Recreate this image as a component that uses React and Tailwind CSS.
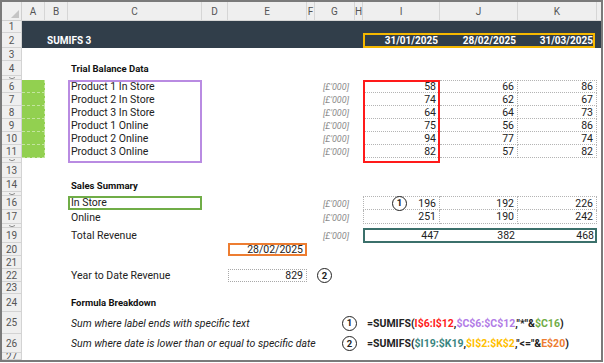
import React from 'react';

const cols = ['A', 'B', 'C', 'D', 'E', 'F', 'G', 'H', 'I', 'J', 'K'];
const colStart = [
    'col-start-2', 'col-start-3', 'col-start-4', 'col-start-5', 'col-start-6', 'col-start-7',
    'col-start-8', 'col-start-9', 'col-start-10', 'col-start-11', 'col-start-12'
];

// row number -> grid row class (grid row 1 is the column header); tiny = hidden-ish row
const rowHeads = [
    ['1', 'row-start-2'], ['2', 'row-start-3'], ['3', 'row-start-4'], ['4', 'row-start-5'],
    ['5', 'row-start-6', true], ['6', 'row-start-7'], ['7', 'row-start-8'], ['8', 'row-start-9'],
    ['9', 'row-start-10'], ['10', 'row-start-11'], ['11', 'row-start-12'], ['12', 'row-start-13', true],
    ['13', 'row-start-14'], ['14', 'row-start-15'], ['15', 'row-start-16', true], ['16', 'row-start-17'],
    ['17', 'row-start-18'], ['18', 'row-start-19', true], ['19', 'row-start-20'], ['20', 'row-start-21'],
    ['21', 'row-start-22'], ['22', 'row-start-23'], ['23', 'row-start-24'], ['24', 'row-start-25'],
    ['25', 'row-start-26'], ['26', 'row-start-27'], ['27', 'row-start-28']
];

const trialBalance = [
    { label: 'Product 1 In Store', row: 'row-start-7', vals: ['58', '66', '86'], first: true },
    { label: 'Product 2 In Store', row: 'row-start-8', vals: ['74', '62', '67'] },
    { label: 'Product 3 In Store', row: 'row-start-9', vals: ['64', '64', '73'] },
    { label: 'Product 1 Online', row: 'row-start-10', vals: ['75', '56', '86'] },
    { label: 'Product 2 Online', row: 'row-start-11', vals: ['94', '77', '74'] },
    { label: 'Product 3 Online', row: 'row-start-12', vals: ['82', '57', '82'] },
];

const unitRows = ['row-start-7', 'row-start-8', 'row-start-9', 'row-start-10', 'row-start-11', 'row-start-12', 'row-start-17', 'row-start-18', 'row-start-20'];
const greenRows = ['row-start-7', 'row-start-8', 'row-start-9', 'row-start-10', 'row-start-11', 'row-start-12'];

const Circle = ({ n }) => (
    <div className="w-[15px] h-[15px] shrink-0 rounded-full border-[1.5px] border-[#222] bg-white flex items-center justify-center text-[9.5px] font-bold text-[#222] leading-none">
        {n}
    </div>
);

const DataCell = ({ row, col, v, top, left }) => (
    <div className={`${row} ${col} ${top ? 'border-t' : ''} ${left ? 'border-l' : ''} border-r border-b border-dotted border-[#b4b4b4] flex items-center justify-end pt-[2px] pr-[3px] text-[10.5px] text-[#222] leading-none`}>
        {v}
    </div>
);

export default function App() {
    return (
        <div className="w-[604px] h-[363px] bg-white font-[Roboto,sans-serif]">
            <div className="w-[603px] h-[362px] border-2 border-[#7a7a7a] overflow-hidden">
                <div className="grid grid-cols-[20px_23px_23px_134px_26px_79px_8px_40px_8px_77px_78px_79px_4px] grid-rows-[19px_12px_15px_13px_15px_4px_13px_13px_13px_13px_13px_13px_5px_15px_14px_4px_14px_14px_4px_15px_13px_13px_13px_12px_18px_22px_19px_7px]">

                    {/* corner + column headers */}
                    <div className="col-start-1 row-start-1 bg-[#efefef] border-r border-b border-[#cfcfcf] relative">
                        <svg className="absolute right-[2px] bottom-[2px]" width="8" height="8" viewBox="0 0 8 8">
                            <path d="M8 0 L8 8 L0 8 Z" fill="#c4c4c4" />
                        </svg>
                    </div>
                    {cols.map((c, i) => (
                        <div key={c} className={`${colStart[i]} row-start-1 bg-[#efefef] border-r border-b border-[#d6d6d6] flex items-center justify-center pt-[1px] text-[10px] text-[#555] leading-none`}>
                            {c}
                        </div>
                    ))}
                    <div className="col-start-13 row-start-1 bg-[#efefef] border-b border-[#d6d6d6]" />

                    {/* row headers */}
                    {rowHeads.map(([n, r, tiny]) => (
                        <div key={n} className={`col-start-1 ${r} bg-[#efefef] border-r border-b border-[#d3d3d3] overflow-hidden flex items-center justify-center pt-[1px] text-[10px] text-[#555] leading-none`}>
                            {tiny ? (
                                <svg width="8" height="3" viewBox="0 0 8 3">
                                    <path d="M1 0.5 Q4 3 7 0.5" fill="none" stroke="#8a8a8a" strokeWidth="1" />
                                </svg>
                            ) : n}
                        </div>
                    ))}

                    {/* title band */}
                    <div className="col-start-2 col-span-12 row-start-2 row-span-2 bg-[#313e4a]" />
                    <div className="col-start-3 col-span-3 row-start-3 flex items-center pt-[1px] pl-[2px] text-[10px] font-bold text-white whitespace-nowrap leading-none">
                        SUMIFS 3
                    </div>
                    <div className="col-start-10 row-start-3 flex items-center justify-end pt-[1px] pr-[2px] text-[10px] font-bold text-white leading-none">31/01/2025</div>
                    <div className="col-start-11 row-start-3 flex items-center justify-end pt-[1px] pr-[2px] text-[10px] font-bold text-white leading-none">28/02/2025</div>
                    <div className="col-start-12 row-start-3 flex items-center justify-end pt-[1px] pr-[4px] text-[10px] font-bold text-white leading-none">31/03/2025</div>
                    <div className="col-start-10 col-span-3 row-start-3 border-2 border-[#f5b800] mr-[2px]" />

                    {/* Trial balance */}
                    <div className="col-start-4 row-start-5 flex items-center pt-[1px] pl-[3px] text-[9.5px] font-bold text-[#111] whitespace-nowrap leading-none">
                        Trial Balance Data
                    </div>
                    {greenRows.map(r => (
                        <div key={r} className={`col-start-2 ${r} bg-[#92d050] border-r border-b border-dashed border-[#c3e59f]`} />
                    ))}
                    {trialBalance.map(t => (
                        <React.Fragment key={t.label}>
                            <div className={`col-start-4 ${t.row} flex items-center pt-[2px] pl-[3px] text-[10.5px] text-[#222] whitespace-nowrap leading-none`}>
                                {t.label}
                            </div>
                            <DataCell row={t.row} col="col-start-10" v={t.vals[0]} top={t.first} left />
                            <DataCell row={t.row} col="col-start-11" v={t.vals[1]} top={t.first} />
                            <DataCell row={t.row} col="col-start-12" v={t.vals[2]} top={t.first} />
                        </React.Fragment>
                    ))}
                    <div className="col-start-4 row-start-7 row-span-7 border-2 border-[#b98be2]" />
                    <div className="col-start-10 row-start-7 row-span-7 border-2 border-[#ff1a1a]" />

                    {unitRows.map(r => (
                        <div key={r} className={`col-start-8 ${r} flex items-center justify-end pt-[2px] pr-[6px] text-[9px] italic text-[#8c8c8c] whitespace-nowrap leading-none`}>
                            [£'000]
                        </div>
                    ))}

                    {/* Sales summary */}
                    <div className="col-start-4 row-start-15 flex items-center pt-[1px] pl-[3px] text-[9.5px] font-bold text-[#111] whitespace-nowrap leading-none">
                        Sales Summary
                    </div>
                    <div className="col-start-4 row-start-17 border-2 border-[#70ad47] flex items-center pt-[1px] pl-[1px] text-[10.5px] text-[#222] leading-none">
                        In Store
                    </div>
                    <div className="col-start-4 row-start-18 flex items-center pt-[2px] pl-[3px] text-[10.5px] text-[#222] leading-none">
                        Online
                    </div>
                    <div className="col-start-10 row-start-17 border border-dotted border-[#b4b4b4] flex items-center pl-[28px] pr-[3px] text-[10.5px] text-[#222] leading-none">
                        <Circle n="1" />
                        <span className="ml-auto pt-[2px]">196</span>
                    </div>
                    <DataCell row="row-start-17" col="col-start-11" v="192" top />
                    <DataCell row="row-start-17" col="col-start-12" v="226" top />
                    <DataCell row="row-start-18" col="col-start-10" v="251" left />
                    <DataCell row="row-start-18" col="col-start-11" v="190" />
                    <DataCell row="row-start-18" col="col-start-12" v="242" />

                    <div className="col-start-4 row-start-20 flex items-center pt-[2px] pl-[3px] text-[10.5px] text-[#222] leading-none">
                        Total Revenue
                    </div>
                    <div className="col-start-10 col-span-3 row-start-20 border-2 border-[#3b706b] grid grid-cols-[75px_78px_1fr] text-[10.5px] text-[#222] leading-none">
                        <div className="flex items-center justify-end pt-[1px] pr-[1px]">447</div>
                        <div className="flex items-center justify-end pt-[1px] pr-[3px]">382</div>
                        <div className="flex items-center justify-end pt-[1px] pr-[1px]">468</div>
                    </div>

                    <div className="col-start-6 row-start-21 border-2 border-[#ed7d31] flex items-center justify-end pt-[1px] pr-[2px] text-[10.5px] text-[#222] leading-none">
                        28/02/2025
                    </div>

                    <div className="col-start-4 row-start-23 flex items-center pt-[2px] pl-[3px] text-[10.5px] text-[#222] whitespace-nowrap leading-none">
                        Year to Date Revenue
                    </div>
                    <div className="col-start-6 row-start-23 border border-dotted border-[#a8a8a8] flex items-center justify-end pt-[1px] pr-[3px] text-[10.5px] text-[#222] leading-none">
                        829
                    </div>
                    <div className="col-start-7 col-span-2 row-start-23 flex items-center pl-[10px]">
                        <Circle n="2" />
                    </div>

                    {/* Formula breakdown */}
                    <div className="col-start-4 row-start-25 flex items-center pl-[3px] text-[9.5px] font-bold text-[#111] whitespace-nowrap leading-none">
                        Formula Breakdown
                    </div>
                    <div className="col-start-4 col-span-4 row-start-26 flex items-center pt-[2px] pl-[3px] text-[10.5px] italic text-[#222] whitespace-nowrap leading-none">
                        Sum where label ends with specific text
                    </div>
                    <div className="col-start-8 col-span-6 row-start-26 flex items-center gap-[10px] pl-[27px] text-[10.5px] font-bold text-[#222] whitespace-nowrap leading-none">
                        <Circle n="1" />
                        <span className="pt-[2px]">
                            =SUMIFS(<span className="text-[#ff1a1a]">I$6:I$12</span>,<span className="text-[#b27ce6]">$C$6:$C$12</span>,"*"&amp;<span className="text-[#70ad47]">$C16</span>)
                        </span>
                    </div>
                    <div className="col-start-4 col-span-4 row-start-27 flex items-center pt-[2px] pl-[3px] text-[10.5px] italic text-[#222] whitespace-nowrap leading-none">
                        Sum where date is lower than or equal to specific date
                    </div>
                    <div className="col-start-8 col-span-6 row-start-27 flex items-center gap-[10px] pl-[27px] text-[10.5px] font-bold text-[#222] whitespace-nowrap leading-none">
                        <Circle n="2" />
                        <span className="pt-[2px]">
                            =SUMIFS(<span className="text-[#3a8580]">$I19:$K19</span>,<span className="text-[#ffc000]">$I$2:$K$2</span>,"&lt;="&amp;<span className="text-[#ed7d31]">E$20</span>)
                        </span>
                    </div>
                </div>
            </div>
        </div>
    );
}
